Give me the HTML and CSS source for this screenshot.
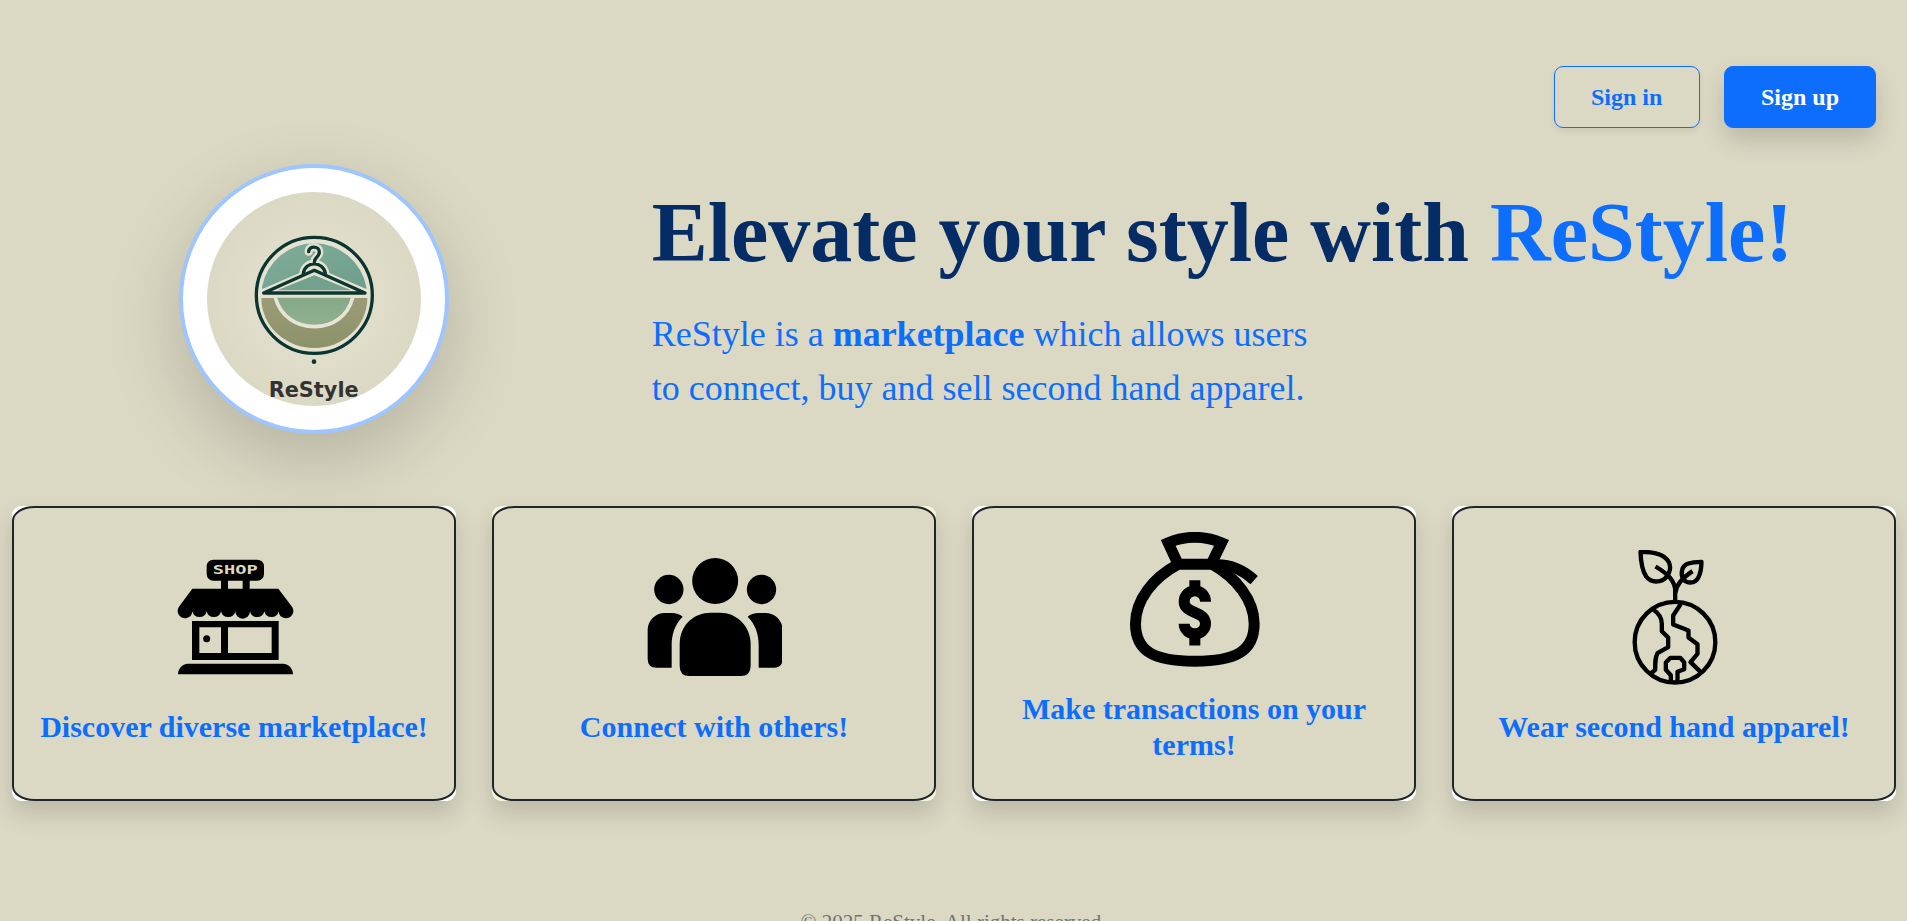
FILE: index.html
```html
<!DOCTYPE html>
<html lang="en">
<head>
<meta charset="utf-8">
<title>ReStyle</title>
<link rel="stylesheet" href="styles.css">
</head>
<body>
<header class="topbar">
  <a class="btn btn-outline">Sign in</a>
  <a class="btn btn-primary">Sign up</a>
</header>
<main>
  <section class="hero">
    <div class="logo-col">
      <div class="logo">
        <svg class="logo-art" viewBox="141 126 642 642">
          <defs>
            <radialGradient id="paper"><stop offset="0" stop-color="#e3e0d0"/><stop offset=".65" stop-color="#dfddca"/><stop offset="1" stop-color="#dbd9c3"/></radialGradient>
            <linearGradient id="sky" x1="0" y1="0" x2="1" y2="1"><stop offset="0" stop-color="#80ad9a"/><stop offset="1" stop-color="#6d9e8b"/></linearGradient>
            <linearGradient id="bowl" x1="0" y1="0" x2="0" y2="1"><stop offset="0" stop-color="#86a987"/><stop offset="1" stop-color="#90b18f"/></linearGradient>
            <linearGradient id="olive" x1="0" y1="0" x2="0" y2="1"><stop offset="0" stop-color="#9b9c75"/><stop offset="1" stop-color="#8c926a"/></linearGradient>
          </defs>
          <rect x="141" y="126" width="642" height="642" fill="url(#paper)"/>
          <circle cx="463" cy="436" r="174" fill="#e5e2d3" stroke="#0b352f" stroke-width="10"/>
          <path d="M306 411A159 159 0 0 1 619 411L620 425H306Z" fill="url(#sky)"/>
          <path d="M304 444H622A159 150 0 0 1 304 444Z" fill="url(#olive)"/>
          <path d="M346 443C362 498 407 530 463 530S564 498 578 443" fill="url(#bowl)"/>
          <path d="M346 443C362 498 407 530 463 530S564 498 578 443" fill="none" stroke="#e8e5d8" stroke-width="11"/>
          <g fill="none" stroke="#e5e2d3" stroke-width="24" stroke-linecap="round" stroke-linejoin="round">
            <path d="M310 429L463 363L616 429Z"/>
            <path d="M446 305C445 287 478 287 478 306C478 322 463 320 463 337M430 370C435 332 490 332 496 370"/>
          </g>
          <path d="M352 421L463 376L574 421Z" fill="#72a18d"/>
          <g fill="none" stroke="#0b352f" stroke-width="10" stroke-linecap="round" stroke-linejoin="round">
            <path d="M311 429L463 361L615 429Z"/>
            <path d="M446 305C445 287 478 287 478 306C478 322 463 320 463 337M430 370C435 332 490 332 496 370"/>
          </g>
          <circle cx="462" cy="635" r="7" fill="#0b352f"/>
          <text class="logo-text" x="326" y="742" textLength="270" lengthAdjust="spacingAndGlyphs">ReStyle</text>
        </svg>
      </div>
    </div>
    <div class="hero-text">
      <h1>Elevate your style with <span>ReStyle!</span></h1>
      <p>ReStyle is a <b>marketplace</b> which allows users<br>to connect, buy and sell second hand apparel.</p>
    </div>
  </section>
  <section class="cards">
    <article class="card"><div class="card-body">
      <svg class="icon" viewBox="498 181 405 405">
        <rect x="617" y="210" width="172" height="63" rx="20"/>
        <path d="M660 270h21v28h-21zM725 270h21v28h-21z"/>
        <path d="M574 297H832L872 350A22 22 0 1 1 833 365A22 22 0 0 1 790 365A22 22 0 0 1 747 365A22 22 0 0 1 703 365A22 22 0 0 1 660 365A22 22 0 0 1 617 365A22 22 0 0 1 574 365A22 22 0 1 1 535 350Z"/>
        <path fill-rule="evenodd" d="M573 394H833V511H573ZM595 413V490H660V413ZM681 413V490H812V413Z"/>
        <circle cx="617" cy="447" r="10.500"/>
        <path d="M531 554C531 538 543 522 561 522H846C864 522 876 538 876 554Z"/>
        <text class="shop-text" x="635" y="253" textLength="135" lengthAdjust="spacingAndGlyphs">SHOP</text>
      </svg>
      <h3>Discover diverse marketplace!</h3>
    </div></article>
    <article class="card card-beige"><div class="card-body">
      <svg class="icon" viewBox="499 181 405 405">
        <circle cx="703.500" cy="274" r="69"/><circle cx="564.500" cy="299.500" r="44"/><circle cx="842.500" cy="299.500" r="44"/>
        <path d="M597 464C597 404 642 369 689 369H718C768 369 810 409 810 464V529Q810 559 780 559H626Q597 559 597 529Z"/>
        <path d="M501 421C501 393 524 370 552 370H573Q593 370 606 381C582 405 573 435 573 466V534H528Q501 534 501 507Z"/>
        <path d="M906 421C906 393 883 370 855 370H834Q814 370 801 381C825 405 834 435 834 466V534H879Q906 534 906 507Z"/>
      </svg>
      <h3>Connect with others!</h3>
    </div></article>
    <article class="card"><div class="card-body">
      <svg class="icon" viewBox="498.500 126.500 405 405">
        <g fill="none" stroke="#000" stroke-width="33">
          <path d="M649 217L622 159Q702 126 782 159L754 217"/>
          <path d="M653 223H754C825 263 880 330 880 402C880 485 824 514 702 514S524 485 524 402C524 330 577 263 653 223Z"/>
          <path d="M766 225C812 224 846 240 880 271"/>
          <path d="M734 336V335A32 32 0 0 0 670 335C670 374 734 361 734 402A32 30 0 0 1 670 402M702 271V304M702 434V467"/>
        </g>
      </svg>
      <h3>Make transactions on your terms!</h3>
    </div></article>
    <article class="card"><div class="card-body">
      <svg class="icon" viewBox="529.500 180.500 405 405">
        <g fill="none" stroke="#000" stroke-width="13" stroke-linejoin="round">
          <circle cx="733.500" cy="457" r="121"/>
          <path d="M630 186C668 186 702 192 715 217C726 239 711 268 687 274C671 277 656 272 647 260C635 242 631 217 630 186Z"/>
          <path d="M813 216C780 217 760 221 755 240C750 260 759 277 778 278C805 279 812 248 813 216Z"/>
          <path d="M675 230C712 252 735 273 735 308C737 286 756 264 786 244M734 290V336"/>
          <path d="M668 359C686 371 694 388 694 402V424L713 443V472L681 490C674 503 674 515 674 540L661 551"/>
          <path d="M751 342L728 377V404L774 422V443L801 463V492L780 517L811 547"/>
          <path d="M721 575V556L706 540V518L720 504H749L761 517V538L741 546V575"/>
        </g>
      </svg>
      <h3>Wear second hand apparel!</h3>
    </div></article>
  </section>
</main>
<footer class="footer">© 2025 ReStyle. All rights reserved.</footer>
</body>
</html>
```
FILE: styles.css
```css
* { box-sizing: border-box; }
body {
  margin: 0;
  height: 921px;
  overflow: hidden;
  background: #dbd9c3;
  font-family: "Liberation Serif", serif;
  line-height: 1.5;
  color: #212529;
}
.topbar {
  display: flex;
  justify-content: flex-end;
  gap: 24px;
  padding: 66px 31px 0 0;
}
.btn {
  min-width: 146px;
  padding: 12px 36px;
  border: 1px solid #0d6efd;
  border-radius: 9px;
  font-size: 24px;
  font-weight: 700;
  line-height: 36px;
}
.btn-outline { color: #0d6efd; box-shadow: 0 3px 6px rgba(0, 0, 0, .075); }
.btn-primary { color: #fff; background: #0d6efd; box-shadow: 0 12px 24px rgba(0, 0, 0, .15); }
.hero {
  display: grid;
  grid-template-columns: 1fr 2fr;
  align-items: center;
  margin: 36px 24px 0 0;
}
.logo-col { display: flex; justify-content: center; }
.logo {
  width: 270px;
  height: 270px;
  padding: 24px;
  border: 4px solid #9ec5fe;
  border-radius: 50%;
  background: #fff;
  box-shadow: 0 24px 72px rgba(0, 0, 0, .175);
}
.logo-art { display: block; width: 214px; height: 214px; border-radius: 50%; }
.logo-text { font: 700 64px "DejaVu Sans", sans-serif; fill: #333; }
.hero-text { padding-left: 24px; }
h1 {
  margin: 0 0 24px;
  font-size: 84px;
  line-height: 1.2;
  color: #052c65;
  white-space: nowrap;
}
h1 span { color: #0d6efd; }
.hero-text p { margin: 0; font-size: 36px; color: #0d6efd; }
.cards {
  display: grid;
  grid-template-columns: repeat(4, 1fr);
  gap: 36px;
  margin-top: 72px;
  padding: 0 11px 0 12px;
}
.card {
  height: 295px;
  border-radius: 9px;
  background: #fff;
  box-shadow: 0 12px 24px rgba(0, 0, 0, .15);
}
.card-beige { background: #f5f5dc; }
.card-body {
  display: flex;
  flex-direction: column;
  align-items: center;
  justify-content: center;
  height: 100%;
  padding: 0 24px;
  border: 2px solid #212529;
  border-radius: 5%;
  background: #dbd9c3;
}
.icon { width: 135px; height: 135px; flex: none; }
.shop-text { font: 700 37px "DejaVu Sans Mono", monospace; fill: #dbd9c3; }
h3 {
  margin: 24px 0 12px;
  font-size: 30px;
  line-height: 36px;
  text-align: center;
  color: #0d6efd;
}
.footer { margin-top: 106px; font-size: 21px; text-align: center; color: #6c757d; }
```
